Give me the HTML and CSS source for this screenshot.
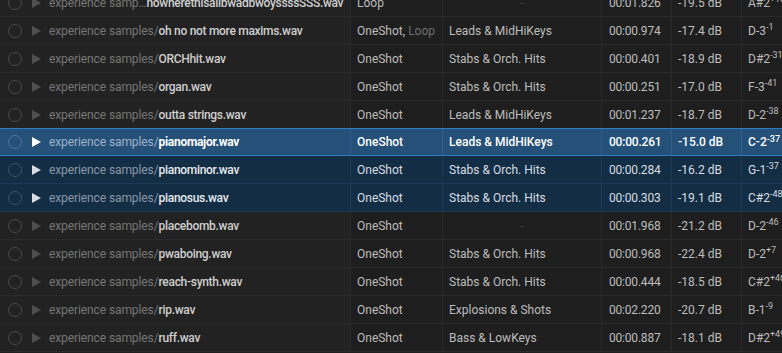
FILE: index.html
```html
<!DOCTYPE html>
<html>
<head>
<meta charset="utf-8">
<link rel="stylesheet" href="styles.css">
</head>
<body>
<div class="list">
  <div class="row">
    <div class="cell c-name"><span class="radio"></span><span class="play"></span><span class="dir">experience samp…</span><span class="file">nowherethisallbwadbwoyssssSSS.wav</span></div>
    <div class="cell c-type">Loop</div>
    <div class="cell c-cat empty">-</div>
    <div class="cell c-dur">00:01.826</div>
    <div class="cell c-db">-19.5 dB</div>
    <div class="cell c-pitch">A#2<sup>+18</sup></div>
  </div>
  <div class="row">
    <div class="cell c-name"><span class="radio"></span><span class="play"></span><span class="dir">experience samples/</span><span class="file">oh no not more maxims.wav</span></div>
    <div class="cell c-type">OneShot, <span class="dim">Loop</span></div>
    <div class="cell c-cat">Leads &amp; MidHiKeys</div>
    <div class="cell c-dur">00:00.974</div>
    <div class="cell c-db">-17.4 dB</div>
    <div class="cell c-pitch">D-3<sup>-1</sup></div>
  </div>
  <div class="row">
    <div class="cell c-name"><span class="radio"></span><span class="play"></span><span class="dir">experience samples/</span><span class="file">ORCHhit.wav</span></div>
    <div class="cell c-type">OneShot</div>
    <div class="cell c-cat">Stabs &amp; Orch. Hits</div>
    <div class="cell c-dur">00:00.401</div>
    <div class="cell c-db">-18.9 dB</div>
    <div class="cell c-pitch">D#2<sup>-31</sup></div>
  </div>
  <div class="row">
    <div class="cell c-name"><span class="radio"></span><span class="play"></span><span class="dir">experience samples/</span><span class="file">organ.wav</span></div>
    <div class="cell c-type">OneShot</div>
    <div class="cell c-cat">Stabs &amp; Orch. Hits</div>
    <div class="cell c-dur">00:00.251</div>
    <div class="cell c-db">-17.0 dB</div>
    <div class="cell c-pitch">F-3<sup>-41</sup></div>
  </div>
  <div class="row">
    <div class="cell c-name"><span class="radio"></span><span class="play"></span><span class="dir">experience samples/</span><span class="file">outta strings.wav</span></div>
    <div class="cell c-type">OneShot</div>
    <div class="cell c-cat">Leads &amp; MidHiKeys</div>
    <div class="cell c-dur">00:01.237</div>
    <div class="cell c-db">-18.7 dB</div>
    <div class="cell c-pitch">D-2<sup>-38</sup></div>
  </div>
  <div class="row active">
    <div class="cell c-name"><span class="radio"></span><span class="play"></span><span class="dir">experience samples/</span><span class="file">pianomajor.wav</span></div>
    <div class="cell c-type">OneShot</div>
    <div class="cell c-cat">Leads &amp; MidHiKeys</div>
    <div class="cell c-dur">00:00.261</div>
    <div class="cell c-db">-15.0 dB</div>
    <div class="cell c-pitch">C-2<sup>-37</sup></div>
  </div>
  <div class="row selected">
    <div class="cell c-name"><span class="radio"></span><span class="play"></span><span class="dir">experience samples/</span><span class="file">pianominor.wav</span></div>
    <div class="cell c-type">OneShot</div>
    <div class="cell c-cat">Stabs &amp; Orch. Hits</div>
    <div class="cell c-dur">00:00.284</div>
    <div class="cell c-db">-16.2 dB</div>
    <div class="cell c-pitch">G-1<sup>-37</sup></div>
  </div>
  <div class="row selected">
    <div class="cell c-name"><span class="radio"></span><span class="play"></span><span class="dir">experience samples/</span><span class="file">pianosus.wav</span></div>
    <div class="cell c-type">OneShot</div>
    <div class="cell c-cat">Stabs &amp; Orch. Hits</div>
    <div class="cell c-dur">00:00.303</div>
    <div class="cell c-db">-19.1 dB</div>
    <div class="cell c-pitch">C#2<sup>-48</sup></div>
  </div>
  <div class="row">
    <div class="cell c-name"><span class="radio"></span><span class="play"></span><span class="dir">experience samples/</span><span class="file">placebomb.wav</span></div>
    <div class="cell c-type">OneShot</div>
    <div class="cell c-cat empty">-</div>
    <div class="cell c-dur">00:01.968</div>
    <div class="cell c-db">-21.2 dB</div>
    <div class="cell c-pitch">D-2<sup>-46</sup></div>
  </div>
  <div class="row">
    <div class="cell c-name"><span class="radio"></span><span class="play"></span><span class="dir">experience samples/</span><span class="file">pwaboing.wav</span></div>
    <div class="cell c-type">OneShot</div>
    <div class="cell c-cat">Stabs &amp; Orch. Hits</div>
    <div class="cell c-dur">00:00.968</div>
    <div class="cell c-db">-22.4 dB</div>
    <div class="cell c-pitch">D-2<sup>+7</sup></div>
  </div>
  <div class="row">
    <div class="cell c-name"><span class="radio"></span><span class="play"></span><span class="dir">experience samples/</span><span class="file">reach-synth.wav</span></div>
    <div class="cell c-type">OneShot</div>
    <div class="cell c-cat">Stabs &amp; Orch. Hits</div>
    <div class="cell c-dur">00:00.444</div>
    <div class="cell c-db">-18.5 dB</div>
    <div class="cell c-pitch">C#2<sup>+46</sup></div>
  </div>
  <div class="row">
    <div class="cell c-name"><span class="radio"></span><span class="play"></span><span class="dir">experience samples/</span><span class="file">rip.wav</span></div>
    <div class="cell c-type">OneShot</div>
    <div class="cell c-cat">Explosions &amp; Shots</div>
    <div class="cell c-dur">00:02.220</div>
    <div class="cell c-db">-20.7 dB</div>
    <div class="cell c-pitch">B-1<sup>-9</sup></div>
  </div>
  <div class="row">
    <div class="cell c-name"><span class="radio"></span><span class="play"></span><span class="dir">experience samples/</span><span class="file">ruff.wav</span></div>
    <div class="cell c-type">OneShot</div>
    <div class="cell c-cat">Bass &amp; LowKeys</div>
    <div class="cell c-dur">00:00.887</div>
    <div class="cell c-db">-18.1 dB</div>
    <div class="cell c-pitch">D#2<sup>+49</sup></div>
  </div>
</div>
</body>
</html>
```
FILE: styles.css
```css
html, body {
  margin: 0;
  padding: 0;
  background: #1e1e1e;
  overflow: hidden;
  width: 782px;
  height: 353px;
}
.list {
  margin-top: -11px;
  font-family: Roboto, "Noto Sans", sans-serif;
  font-size: 12px;
  color: #bdbdbd;
}
.row {
  display: grid;
  grid-template-columns: 351px 92px 159px 70px 70px 60px;
  height: 27px;
  border-bottom: 1px solid #2a2a2a;
  background: #1e1e1e;
}
.cell {
  display: flex;
  align-items: center;
  padding-left: 6px;
  border-right: 1px solid #2a2a2a;
  white-space: nowrap;
  overflow: hidden;
}
.c-name {
  padding-left: 8px;
  background: #222222;
}
.radio {
  width: 12px;
  height: 12px;
  border: 1px solid #4a4a4a;
  border-radius: 50%;
  flex: none;
  margin-right: 10px;
}
.play {
  width: 0;
  height: 0;
  border-top: 5px solid transparent;
  border-bottom: 5px solid transparent;
  border-left: 9px solid #4f4f4f;
  flex: none;
  margin-right: 8px;
}
.dir { color: #767676; letter-spacing: -0.1px; }
.file { color: #cfcfcf; font-weight: 500; letter-spacing: -0.3px; }
.dim { color: #6e6e6e; margin-left: 3px; }
.c-cat.empty { justify-content: center; padding-left: 0; color: #444; }
.c-dur { padding-left: 7px; letter-spacing: -0.2px; }
.c-pitch { border-right: none; }
sup { font-size: 9px; align-self: flex-start; margin-top: 5px; vertical-align: baseline; }

.row.active {
  background: #255078;
  border-top: 1px solid #2f7bc4;
  border-bottom: 1px solid #2f7bc4;
  height: 26px;
  margin-top: -1px;
  color: #ffffff;
  font-weight: 500;
}
.row.active .c-name { background: #255078; }
.row.active .cell { border-right-color: #2c5f8e; }
.row.active .radio { border-color: #5277a0; }
.row.active .play { border-left-color: #ffffff; }
.row.active .dir { color: #9fb3c8; font-weight: 400; }
.row.active .file { color: #ffffff; font-weight: 700; }

.row.selected {
  background: #132d45;
  border-bottom-color: #1c3a55;
  color: #d8dde2;
}
.row.selected .c-name { background: #132d45; }
.row.selected .cell { border-right-color: #1c3a55; }
.row.selected .radio { border-color: #3d5266; }
.row.selected .play { border-left-color: #d8dde2; }
.row.selected .dir { color: #8b98a5; }
.row.selected .file { color: #e6eaee; font-weight: 500; }
```
